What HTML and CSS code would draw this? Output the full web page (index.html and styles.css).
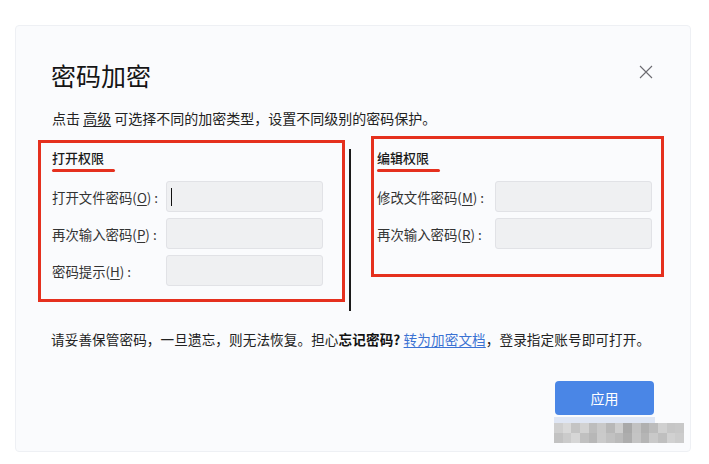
FILE: index.html
```html
<!DOCTYPE html>
<html>
<head>
    <title>密码加密</title>
    <link rel="stylesheet" href="styles.css">
</head>
<body>
    <div class="dialog">
        <div class="dialog-header">
            <h1 class="dialog-title">密码加密</h1>
            <span class="close-btn">
                <svg width="14" height="14" viewBox="0 0 14 14"><path d="M1 1L13 13M13 1L1 13" stroke="#6b6b70" stroke-width="1.1" fill="none"/></svg>
            </span>
        </div>
        <p class="intro">点击 <u>高级</u> 可选择不同的加密类型，设置不同级别的密码保护。</p>

        <div class="perm-row">
            <div class="perm-box perm-open">
                <div class="perm-title">打开权限</div>
                <div class="form-grid">
                    <label>打开文件密码(<u>O</u>) :</label>
                    <div class="field"><span class="caret"></span></div>
                    <label>再次输入密码(<u>P</u>) :</label>
                    <div class="field"></div>
                    <label>密码提示(<u>H</u>) :</label>
                    <div class="field"></div>
                </div>
            </div>
            <div class="divider"></div>
            <div class="perm-box perm-edit">
                <div class="perm-title">编辑权限</div>
                <div class="form-grid wide">
                    <label>修改文件密码(<u>M</u>) :</label>
                    <div class="field"></div>
                    <label>再次输入密码(<u>R</u>) :</label>
                    <div class="field"></div>
                </div>
            </div>
        </div>

        <p class="notice">请妥善保管密码，一旦遗忘，则无法恢复。担心<b>忘记密码?</b> <a class="link">转为加密文档</a>，登录指定账号即可打开。</p>

        <div class="actions">
            <button class="apply-btn">应用</button>
        </div>

        <div class="mosaic">
            <div class="mosaic-top"></div>
            <div class="mosaic-grid" id="mosaic"></div>
        </div>
    </div>

    <script>
        // 水印马赛克
        var greys = ['#cfcfcf','#d9d9d9','#c4c4c4','#d2d2d2','#bdbdbd','#c9c9c9','#b8b8b8','#cdcdcd','#a9a9a9','#c2c2c2','#b0b0b0','#bcbcbc','#d0d0d0','#c6c6c6','#c8c8c8',
                     '#c2c2c2','#cbcbcb','#d6d6d6','#c0c0c0','#b7b7b7','#cacaca','#c1c1c1','#bababa','#adadad','#c4c4c4','#b5b5b5','#c9c9c9','#bfbfbf','#d1d1d1','#cccccc'];
        var grid = document.getElementById('mosaic');
        greys.forEach(function(c) {
            var cell = document.createElement('span');
            cell.style.background = c;
            grid.appendChild(cell);
        });
    </script>
</body>
</html>
```

FILE: styles.css
```css
body {
    margin: 0;
    background: #ffffff;
    font-family: "Noto Sans CJK SC", "Noto Sans", sans-serif;
    color: #222;
}
.dialog {
    position: relative;
    box-sizing: border-box;
    width: 676px;
    height: 427px;
    margin: 25px 0 0 15px;
    padding: 30px 36px 0 36px;
    background: #fafbfd;
    border: 1px solid #eef0f4;
    border-radius: 4px;
}
.dialog-header {
    display: flex;
    justify-content: space-between;
    align-items: center;
}
.dialog-title {
    margin: 0 0 0 -1px;
    font-size: 25px;
    font-weight: normal;
    line-height: 38px;
    color: #151515;
}
.close-btn {
    display: flex;
    margin: -6px 1px 0 0;
}
.intro {
    margin: 14px 0 0 0;
    font-size: 14px;
    line-height: 20px;
    color: #222;
}
.intro u {
    text-underline-offset: 2px;
}
.perm-row {
    display: flex;
    align-items: flex-start;
    margin: 8px -14px 0 -14px;
}
.perm-box {
    box-sizing: border-box;
    flex-shrink: 0;
    border: 3px solid #e5301e;
}
.perm-open {
    width: 307px;
    height: 162px;
    margin-top: 4px;
    padding: 5px 0 0 11px;
}
.perm-edit {
    width: 293px;
    height: 141px;
    padding: 9px 0 0 3px;
}
.divider {
    flex-shrink: 0;
    width: 2px;
    height: 162px;
    margin: 13px 20px 0 4px;
    background: #1a1a1a;
}
.perm-title {
    font-size: 13px;
    line-height: 20px;
    font-weight: 500;
    color: #1a1a1a;
}
.perm-title::after {
    content: "";
    display: block;
    width: 63px;
    height: 3px;
    margin-top: 1px;
    border-radius: 2px;
    background: #e5301e;
}
.form-grid {
    display: grid;
    grid-template-columns: 114px 157px;
    grid-auto-rows: 31px;
    row-gap: 6px;
    margin-top: 9px;
}
.form-grid.wide {
    grid-template-columns: 118px 157px;
}
.form-grid label {
    display: flex;
    align-items: center;
    font-size: 13.4px;
    color: #333;
    white-space: nowrap;
}
.form-grid label u {
    text-underline-offset: 2px;
}
.field {
    box-sizing: border-box;
    display: flex;
    align-items: center;
    padding-left: 4px;
    background: #eff0f2;
    border: 1px solid #e1e2e6;
    border-radius: 3px;
}
.caret {
    width: 1px;
    height: 18px;
    background: #111;
}
.notice {
    margin: 18px 0 0 -1px;
    font-size: 13.6px;
    letter-spacing: 0.1px;
    line-height: 20px;
    color: #222;
    white-space: nowrap;
}
.notice b {
    font-weight: bold;
    color: #111;
}
.link {
    color: #3b72d3;
    text-decoration: underline;
    text-underline-offset: 2px;
}
.actions {
    display: flex;
    justify-content: flex-end;
    margin-top: 32px;
}
.apply-btn {
    width: 99px;
    height: 34px;
    border: none;
    border-radius: 4px;
    background: #4a86e6;
    color: #fff;
    font-family: "Noto Sans CJK SC", sans-serif;
    font-size: 14px;
}
.mosaic {
    position: absolute;
    left: 538px;
    top: 391px;
    width: 130px;
}
.mosaic-top {
    width: 101px;
    height: 6px;
    background: #dfe6f4;
}
.mosaic-grid {
    display: grid;
    grid-template-columns: repeat(15, 1fr);
    grid-auto-rows: 10px;
}
```
